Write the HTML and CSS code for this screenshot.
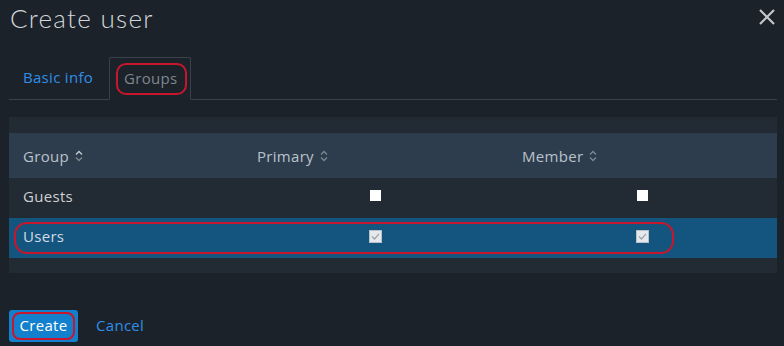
FILE: index.html
```html
<!DOCTYPE html>
<html>
<head>
<meta charset="utf-8">
<link rel="stylesheet" href="styles.css">
</head>
<body>
<div class="modal">
  <div class="head">
    <h1 class="title">Create user</h1>
    <svg class="close" width="18" height="18" viewBox="0 0 18 18"><path d="M2 2L16 16M16 2L2 16" stroke="#c3c7cb" stroke-width="2.2" fill="none"/></svg>
  </div>
  <div class="tabs">
    <div class="tab link">Basic info</div>
    <div class="tab active"><span>Groups</span><i class="mark mark-tab"></i></div>
  </div>
  <div class="table">
    <div class="band top"></div>
    <div class="row hdr">
      <div class="c c1">Group <svg class="sort" width="8" height="12" viewBox="0 0 8 12"><path d="M1 4.5L4 1.5L7 4.5" stroke="#c6ccd2" stroke-width="1.3" fill="none"/><path d="M1 7.5L4 10.5L7 7.5" stroke="#7d8893" stroke-width="1.3" fill="none"/></svg></div>
      <div class="c c2">Primary <svg class="sort" width="8" height="12" viewBox="0 0 8 12"><path d="M1 4.5L4 1.5L7 4.5" stroke="#7d8893" stroke-width="1.3" fill="none"/><path d="M1 7.5L4 10.5L7 7.5" stroke="#7d8893" stroke-width="1.3" fill="none"/></svg></div>
      <div class="c c3">Member <svg class="sort" width="8" height="12" viewBox="0 0 8 12"><path d="M1 4.5L4 1.5L7 4.5" stroke="#7d8893" stroke-width="1.3" fill="none"/><path d="M1 7.5L4 10.5L7 7.5" stroke="#7d8893" stroke-width="1.3" fill="none"/></svg></div>
    </div>
    <div class="row body">
      <div class="c c1">Guests</div>
      <div class="c c2 ctr"><span class="box"></span></div>
      <div class="c c3 ctr"><span class="box"></span></div>
    </div>
    <div class="row body sel">
      <div class="c c1">Users</div>
      <div class="c c2 ctr"><svg class="chk" width="13" height="13" viewBox="0 0 13 13"><rect x="0.5" y="0.5" width="12" height="12" fill="#e6e9ec" stroke="#b9c0c7"/><path d="M3 6.5L5.5 9L10 3.8" stroke="#9aa3ab" stroke-width="1.2" fill="none"/></svg></div>
      <div class="c c3 ctr"><svg class="chk" width="13" height="13" viewBox="0 0 13 13"><rect x="0.5" y="0.5" width="12" height="12" fill="#e6e9ec" stroke="#b9c0c7"/><path d="M3 6.5L5.5 9L10 3.8" stroke="#9aa3ab" stroke-width="1.2" fill="none"/></svg></div>
      <i class="mark mark-row"></i>
    </div>
    <div class="band bottom"></div>
  </div>
  <div class="foot">
    <button class="btn">Create<i class="mark mark-btn"></i></button>
    <span class="cancel">Cancel</span>
  </div>
</div>
</body>
</html>
```
FILE: styles.css
```css
* { box-sizing: border-box; }
html, body { margin: 0; padding: 0; }
body {
  background: #1c222a;
  font-family: "Open Sans", "Noto Sans", sans-serif;
  font-size: 15px;
  letter-spacing: 0.3px;
  color: #c9cdd1;
  width: 784px;
  height: 346px;
  overflow: hidden;
}
.modal { padding: 0 7px 0 9px; }
.head {
  display: flex;
  justify-content: space-between;
  align-items: flex-start;
  height: 57px;
}
.title {
  margin: 0;
  padding: 0 0 0 1px;
  font-family: "Lato", "Open Sans", sans-serif;
  font-weight: 300;
  font-size: 26px;
  line-height: 36px;
  color: #d3d6da;
  letter-spacing: 1.3px;
}
.close { margin-top: 8px; margin-right: 1px; }
.tabs {
  display: flex;
  height: 43px;
  border-bottom: 1px solid #3a414a;
}
.tab {
  height: 43px;
  line-height: 40px;
  position: relative;
}
.tab.link {
  color: #2f8fe8;
  padding: 0 10px 0 14px;
  width: 100px;
}
.tab.active {
  width: 82px;
  border: 1px solid #3a414a;
  border-bottom: 1px solid #1c222a;
  color: #7f878f;
  padding-left: 14px;
  border-radius: 2px 2px 0 0;
  margin-bottom: -1px;
  height: 43px;
  line-height: 40px;
}
.mark {
  position: absolute;
  border: 2px solid #c8162c;
  border-radius: 10px;
  pointer-events: none;
}
.mark-tab { left: 6px; top: 5px; width: 71px; height: 32px; }
.table { margin-top: 17px; width: 768px; }
.band { background: #222a33; }
.band.top { height: 16px; }
.band.bottom { height: 15px; }
.row { display: flex; align-items: center; position: relative; }
.row.hdr { height: 45px; background: #2e3d4d; color: #b9c2cb; }
.row.body { height: 40px; background: #222a33; color: #cdd1d5; }
.row.body .c1 { padding-bottom: 4px; }
.row.sel { background: #13557f; color: #d4dbe2; }
.c { padding-left: 14px; display: flex; align-items: center; }
.c1 { width: 234px; }
.c2 { width: 265px; }
.c3 { width: 269px; }
.ctr { justify-content: center; padding-left: 0; }
.sort { margin-left: 6px; }
.box { display: block; width: 11px; height: 11px; background: #ffffff; margin-bottom: 5px; }
.chk { margin-bottom: 4px; }
.c2 .box, .c2 .chk { margin-right: 1px; }
.mark-row { left: 5px; top: 4px; width: 660px; height: 32px; border-radius: 13px; }
.foot {
  margin-top: 37px;
  display: flex;
  align-items: center;
}
.btn {
  position: relative;
  width: 69px;
  height: 32px;
  border: none;
  border-radius: 3px;
  background: #1380cd;
  color: #ffffff;
  font-family: "Open Sans", "Noto Sans", sans-serif;
  font-size: 15px;
  letter-spacing: 0.3px;
  padding: 0 0 2px 0;
}
.mark-btn { left: 3px; top: 2px; width: 63px; height: 28px; border-radius: 8px; }
.cancel { margin-left: 18px; color: #2f8fe8; padding-bottom: 2px; }
```
